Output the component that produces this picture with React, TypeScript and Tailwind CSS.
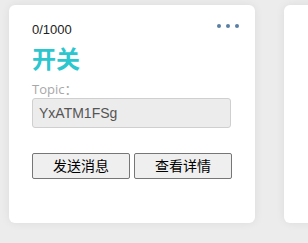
const font = "font-['Liberation_Sans','Noto_Sans_CJK_SC',sans-serif]";

function DeviceCard() {
  return (
    <div className="w-[246px] h-[218px] shrink-0 bg-white rounded-[6px] shadow-[0_0_10px_rgba(0,0,0,0.07)] pt-[16px] px-[23px]">
      <div className="flex items-start justify-between">
        <span className="text-[13px] leading-[18px] text-[#222]">0/1000</span>
        <div className="flex gap-[5px] pt-[3px] mr-[-7px]">
          <span className="w-[4px] h-[4px] rounded-full bg-[#5a7fa5]" />
          <span className="w-[4px] h-[4px] rounded-full bg-[#5a7fa5]" />
          <span className="w-[4px] h-[4px] rounded-full bg-[#5a7fa5]" />
        </div>
      </div>
      <div className="mt-[6px] text-[24px] leading-[29px] font-bold text-[#2cc6cf]">开关</div>
      <div className="mt-[7px] text-[13px] leading-[17px] text-[#a8a8a8] font-['Open_Sans','Noto_Sans_CJK_SC',sans-serif]">Topic：</div>
      <div className="w-[199px] h-[30px] flex items-center px-[6px] bg-[#ececec] border border-[#cfcfcf] rounded-[3px] text-[14px] text-[#555]">
        YxATM1FSg
      </div>
      <div className="mt-[25px] flex gap-[4px]">
        <button className="w-[98px] h-[26px] bg-[#efefef] border border-[#767676] rounded-[2px] text-[14px] text-black">
          发送消息
        </button>
        <button className="w-[98px] h-[26px] bg-[#efefef] border border-[#767676] rounded-[2px] text-[14px] text-black">
          查看详情
        </button>
      </div>
    </div>
  );
}

export default function App() {
  return (
    <main className={`${font} w-[308px] h-[243px] overflow-hidden bg-[#ececec] flex gap-[29px] pl-[9px] pt-[5px]`}>
      <DeviceCard />
      <div className="w-[246px] h-[218px] shrink-0 bg-white rounded-[6px] shadow-[0_0_10px_rgba(0,0,0,0.07)]" />
    </main>
  );
}
